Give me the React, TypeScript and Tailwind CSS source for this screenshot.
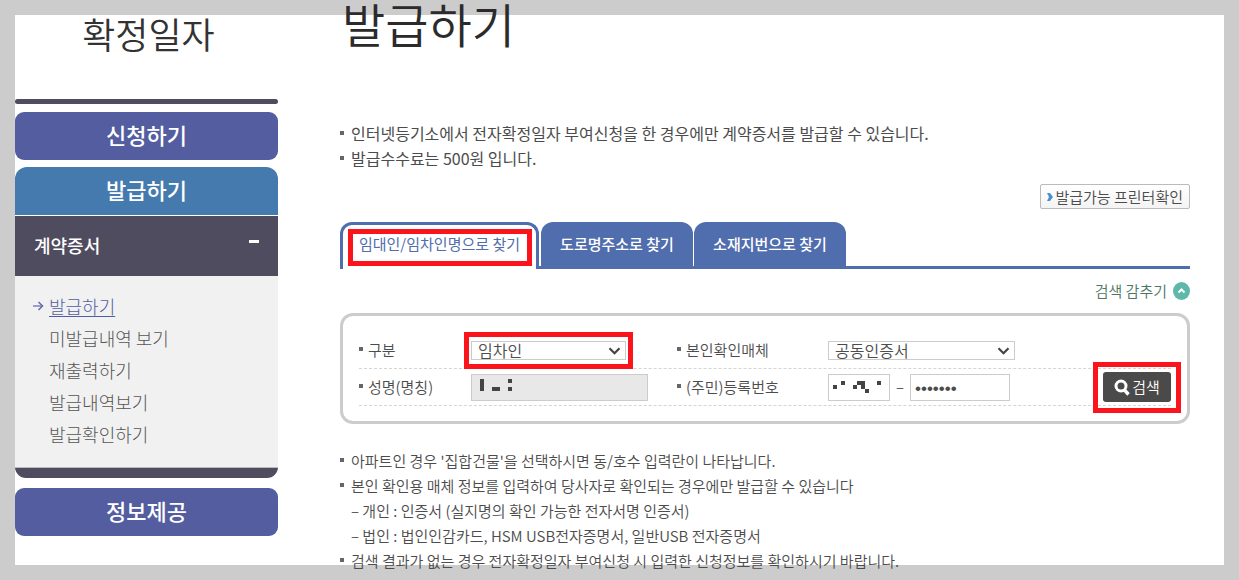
import { useState } from 'react'
import type { ReactNode } from 'react'

type TabId = 'name' | 'road' | 'lot'

const TABS: { id: TabId; label: string; width: string }[] = [
  { id: 'name', label: '임대인/임차인명으로 찾기', width: 'w-[199px]' },
  { id: 'road', label: '도로명주소로 찾기', width: 'w-[152px]' },
  { id: 'lot', label: '소재지번으로 찾기', width: 'w-[152px]' },
]

const SUB_MENU = ['발급하기', '미발급내역 보기', '재출력하기', '발급내역보기', '발급확인하기']

function Bullet() {
  return <span className="mb-0.5 size-1 shrink-0 bg-[#666]" />
}

function Notice({ children, bullet = true, strong = false }: { children: ReactNode; bullet?: boolean; strong?: boolean }) {
  return (
    <li className={`flex items-center whitespace-nowrap leading-[25px] ${strong ? 'text-[16px] font-normal' : 'text-[15px]'}`}>
      {bullet ? <Bullet /> : <span className="w-1 shrink-0" />}
      <span className="ml-[7px]">{children}</span>
    </li>
  )
}

function Label({ htmlFor, children }: { htmlFor: string; children: ReactNode }) {
  return (
    <label htmlFor={htmlFor} className="flex items-center gap-[5px] whitespace-nowrap">
      <Bullet />
      {children}
    </label>
  )
}

// red highlight drawn over a control
function Highlight({ className }: { className: string }) {
  return <span className={`pointer-events-none absolute border-5 border-[#fb141c] ${className}`} />
}

function Select({ id, value, options }: { id: string; value: string; options: string[] }) {
  return (
    <div className="relative">
      <select
        id={id}
        defaultValue={value}
        className="block h-[19px] w-full appearance-none border border-[#ccc] bg-white pl-1.5 text-[16px] leading-[17px] text-[#4c4c4c]"
      >
        {options.map(o => <option key={o}>{o}</option>)}
      </select>
      <svg className="pointer-events-none absolute top-[6px] right-[5px]" width="13" height="8" viewBox="0 0 13 8">
        <path d="M1.5 1.2l5 5 5-5" fill="none" stroke="#444" strokeWidth="2.2" />
      </svg>
    </div>
  )
}

function Sidebar() {
  return (
    <aside className="w-[263px] shrink-0">
      <h2 className="h-[84px] pl-1 text-center text-[36px] leading-[36px] font-[350] text-[#333]">확정일자</h2>
      <div className="h-[5px] rounded-sm bg-[#4f4c5f]" />
      <nav className="mt-2 text-white">
        <button className="h-12 w-full rounded-[9px] bg-[#545d9f] pb-1 text-[22px] font-medium">신청하기</button>
        <button className="mt-[7px] block h-12 w-full rounded-t-[12px] bg-[#447aae] pb-1 text-[22px] font-medium">발급하기</button>
        <button className="mt-px flex h-[60px] w-full items-center justify-between bg-[#4f4c5f] px-[19px] pb-0.5 text-[18px] font-medium">
          계약증서
          <span className="mb-2 h-[3px] w-2.5 bg-white" />
        </button>
        <ul className="bg-[#f1f1f1] pt-3.5 pb-[17px] text-[18px] leading-8 font-light text-[#555]">
          {SUB_MENU.map((item, i) => (
            <li key={item} className="flex items-center pl-[18px]">
              <span className="w-4">
                {i === 0 && (
                  <svg width="11" height="10" viewBox="0 0 11 10" fill="none">
                    <path d="M0 5h9" stroke="#9a9dcb" strokeWidth="2" />
                    <path d="M5.5 1l4 4-4 4" stroke="#6669a6" strokeWidth="1.5" />
                  </svg>
                )}
              </span>
              <a href="#" className={i === 0 ? 'text-[#545d9f] underline underline-offset-2' : ''}>{item}</a>
            </li>
          ))}
        </ul>
        <div className="h-[11px] rounded-b-[12px] border-t border-[#bbb] bg-[#4f4c5f]" />
        <button className="mt-2.5 h-12 w-full rounded-[9px] bg-[#545d9f] pb-1 text-[22px] font-medium">정보제공</button>
      </nav>
    </aside>
  )
}

function SearchForm() {
  return (
    <form
      onSubmit={e => e.preventDefault()}
      className="rounded-[13px] border-3 border-[#ccc] px-4 pt-4 pb-[15px] text-[15px] leading-5"
    >
      <div className="grid h-[37px] grid-cols-[112px_206px_151px_1fr] items-center border-b border-dashed border-[#d5d5d5]">
        <Label htmlFor="kind">구분</Label>
        <div className="relative w-[155px]">
          <Select id="kind" value="임차인" options={['임차인', '임대인']} />
          <Highlight className="-top-[9px] -right-[7px] -bottom-[9px] -left-[7px]" />
        </div>
        <Label htmlFor="media">본인확인매체</Label>
        <div className="w-[187px]">
          <Select id="media" value="공동인증서" options={['공동인증서', '전자증명서']} />
        </div>
      </div>

      <div className="grid h-[37px] grid-cols-[112px_206px_151px_1fr_68px] items-center border-b border-dashed border-[#d5d5d5]">
        <Label htmlFor="person">성명(명칭)</Label>
        <div className="relative w-[177px]">
          <input id="person" readOnly className="block h-[27px] w-full border border-[#ccc] bg-[#e8e8e8] px-1.5" />
          <svg className="pointer-events-none absolute top-[5px] left-[9px]" width="32" height="12" viewBox="0 0 32 12" fill="#444">
            <path d="M0 0h4v12H0zM12 8h8v4h-8zM28 0h4v4h-4zM28 8h4v4h-4z" />
          </svg>
        </div>
        <Label htmlFor="regno">(주민)등록번호</Label>
        <div className="flex items-center">
          <div className="relative w-[62px]">
            <input id="regno" className="block h-[27px] w-full border border-[#ccc] px-1" />
            <svg className="pointer-events-none absolute top-[7px] left-[5px]" width="48" height="12" viewBox="0 0 48 12" fill="#444">
              <path d="M0 4h4v4H0zM8 0h4v4H8zM20 4h4v4h-4zM24 0h8v8h-4V4h-4zM32 8h4v4h-4zM44 0h4v4h-4z" />
            </svg>
          </div>
          <span className="w-5 text-center">–</span>
          <input
            type="password"
            aria-label="등록번호 뒷자리"
            defaultValue="0000000"
            className="h-[27px] w-[100px] border border-[#ccc] px-1 pt-1 font-['Liberation_Sans',sans-serif] text-[17px]"
          />
        </div>
        <div className="relative h-[30px]">
          <button className="flex h-[30px] w-full items-center justify-center gap-0.5 rounded-[3px] bg-[#4a4a4a] text-white">
            <svg width="16" height="17" viewBox="0 0 16 17" fill="none" stroke="#fff">
              <circle cx="7" cy="7" r="5" strokeWidth="3" />
              <path d="M10.5 11l4 4.5" strokeWidth="3.4" />
            </svg>
            검색
          </button>
          <Highlight className="-top-2.5 -right-2.5 -bottom-[11px] -left-2.5" />
        </div>
      </div>
    </form>
  )
}

export default function App() {
  const [tab, setTab] = useState<TabId>('name')
  const [open, setOpen] = useState(true)

  return (
    <div className="h-screen overflow-hidden bg-[#ccc] p-[15px] font-['Noto_Sans_CJK_KR',sans-serif] font-[350] text-[#4c4c4c]">
      <div className="flex h-full gap-[62px] bg-white pr-[34px]">
        <Sidebar />

        <main className="-mt-4 min-w-0 flex-1">
          <h1 className="pl-0.5 text-[47px] leading-[48px] font-[350] text-[#2b2b2b]">발급하기</h1>

          <ul className="mt-[74px]">
            <Notice strong>인터넷등기소에서 전자확정일자 부여신청을 한 경우에만 계약증서를 발급할 수 있습니다.</Notice>
            <Notice strong>발급수수료는 500원 입니다.</Notice>
          </ul>

          <div className="mt-[13px] flex justify-end">
            <button className="flex h-[25px] items-center gap-0.5 rounded-xs border border-[#bbb] bg-linear-to-b from-white to-[#f4f4f4] px-1.5 text-[15px] leading-5">
              <svg width="6" height="8" viewBox="0 0 6 8" fill="#4a90cf"><path d="M0 0h3l3 4-3 4H0l2-4z" /></svg>
              발급가능 프린터확인
            </button>
          </div>

          {/* Tabs */}
          <div className="mt-[13px] flex h-[47px] border-b-3 border-[#506dad] text-[15px]">
            {TABS.map(t => (
              <div key={t.id} className={`relative ${t.width} ${t.id === 'name' ? 'mr-0.5' : 'mr-px'}`}>
                <button
                  onClick={() => setTab(t.id)}
                  className={`block w-full rounded-t-[12px] ${
                    tab === t.id
                      ? 'h-[47px] border-3 border-b-0 border-[#506dad] bg-white pb-1.5 font-normal text-[#506dad]'
                      : 'h-11 bg-[#506dad] font-medium text-white'
                  }`}
                >
                  {t.label}
                </button>
                {t.id === 'name' && <Highlight className="top-[7px] right-[7px] bottom-0 left-2" />}
              </div>
            ))}
          </div>

          <div className="flex h-11 items-center justify-end">
            <button onClick={() => setOpen(!open)} className="flex items-center gap-1.5 text-[15px] text-[#4b7565]">
              {open ? '검색 감추기' : '검색 보이기'}
              <svg width="17" height="18" viewBox="0 0 17 18">
                <ellipse cx="8.5" cy="9" rx="8.5" ry="9" fill="#5fb7aa" />
                <path d="M5.5 10.5l3-3 3 3" fill="none" stroke="#fff" strokeWidth="2" />
              </svg>
            </button>
          </div>

          {open && <SearchForm />}

          <ul className="mt-6">
            <Notice>아파트인 경우 '집합건물'을 선택하시면 동/호수 입력란이 나타납니다.</Notice>
            <Notice>본인 확인용 매체 정보를 입력하여 당사자로 확인되는 경우에만 발급할 수 있습니다</Notice>
            <Notice bullet={false}>– 개인 : 인증서 (실지명의 확인 가능한 전자서명 인증서)</Notice>
            <Notice bullet={false}>– 법인 : 법인인감카드, HSM USB전자증명서, 일반USB 전자증명서</Notice>
            <Notice>검색 결과가 없는 경우 전자확정일자 부여신청 시 입력한 신청정보를 확인하시기 바랍니다.</Notice>
          </ul>
        </main>
      </div>
    </div>
  )
}
